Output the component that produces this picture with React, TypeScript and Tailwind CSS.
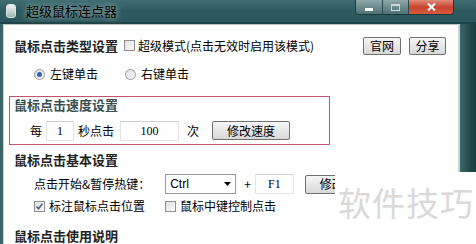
import React from "react";

const cjk = { fontFamily: '"SimSun", "Noto Sans CJK SC", sans-serif' };

function WinButton({ label, className = "" }: { label: string; className?: string }) {
  return (
    <div
      className={
        "flex items-center justify-center h-[18px] border border-[#707070] rounded-[2px] bg-gradient-to-b from-[#f6f6f6] to-[#d8d8d8] text-[12px] text-black leading-none " +
        className
      }
    >
      {label}
    </div>
  );
}

function Check({ checked = false }: { checked?: boolean }) {
  return (
    <div className="w-[11px] h-[11px] border border-[#8f8f8f] bg-gradient-to-br from-[#e2e2e2] to-[#fafafa] flex items-center justify-center">
      {checked && (
        <svg width="9" height="9" viewBox="0 0 9 9">
          <path d="M1.5 4.5 L3.5 6.8 L7.5 1.8" stroke="#4a5d8a" strokeWidth="1.6" fill="none" />
        </svg>
      )}
    </div>
  );
}

function Radio({ checked = false }: { checked?: boolean }) {
  return (
    <div className="w-[11px] h-[11px] rounded-full border border-[#9a9a9a] bg-gradient-to-br from-[#dedede] to-[#fbfbfb] flex items-center justify-center">
      {checked && <div className="w-[5px] h-[5px] rounded-full bg-[#2f63b5]" />}
    </div>
  );
}

function Field({ value, className = "" }: { value: string; className?: string }) {
  return (
    <div
      className={
        "h-[20px] border border-[#e4e4e4] border-t-[#cfcfcf] bg-white flex items-center justify-center text-[12px] text-black " +
        className
      }
      style={{ fontFamily: '"Liberation Serif", serif' }}
    >
      {value}
    </div>
  );
}

export default function App() {
  return (
    <div className="relative w-[476px] h-[244px] overflow-hidden bg-[#1d4347]" style={cjk}>
      {/* title bar */}
      <div className="h-[22px] flex items-start bg-gradient-to-b from-[#3f6d72] via-[#2d5a60] to-[#2a565b]">
        <div className="mt-[4px] ml-[6px] w-[10px] h-[14px] rounded-[3px] border border-[#d8e2e2] bg-gradient-to-b from-[#f0f4f4] to-[#9fb2b2]" />
        <span className="ml-[10px] mt-[3px] text-[13px] text-black leading-[16px] [text-shadow:0_0_6px_rgba(255,255,255,0.8)]">
          超级鼠标连点器
        </span>
        <div className="ml-auto mr-[22px] flex h-[15px] border border-t-0 border-[#1b3a3d] rounded-b-[4px] overflow-hidden">
          <div className="w-[27px] flex items-center justify-center bg-gradient-to-b from-[#8fa8aa] to-[#4f7174] border-r border-[#2a4a4d]">
            <div className="w-[8px] h-[3px] bg-white mt-[5px]" />
          </div>
          <div className="w-[26px] flex items-center justify-center bg-gradient-to-b from-[#8fa8aa] to-[#4f7174] border-r border-[#2a4a4d]">
            <div className="w-[9px] h-[7px] border border-[#cdd8d8] border-t-2" />
          </div>
          <div className="w-[44px] flex items-center justify-center bg-gradient-to-b from-[#e08a78] via-[#c8432e] to-[#d85a3a]">
            <svg width="9" height="8" viewBox="0 0 9 8">
              <path d="M1 0.5 L8 7.5 M8 0.5 L1 7.5" stroke="#fff" strokeWidth="2" />
            </svg>
          </div>
        </div>
      </div>

      <div className="flex h-[222px] pt-[2px]">
        <div className="w-[3px] bg-[#3b6468]" />
        <div className="w-[1px] bg-[#c9d4d4]" />
        {/* client */}
        <div className="w-[454px] bg-white flex flex-col text-[12px] text-black border-t border-[#b9c4c4]">
          <div className="mt-[11px] h-[20px] flex items-center">
            <span className="ml-[10px] text-[13px] text-[#222] font-semibold">鼠标点击类型设置</span>
            <div className="ml-[6px] flex items-center gap-[3px]">
              <Check />
              <span>超级模式(点击无效时启用该模式)</span>
            </div>
            <WinButton label="官网" className="ml-auto w-[38px]" />
            <WinButton label="分享" className="ml-[8px] mr-[12px] w-[37px]" />
          </div>

          <div className="mt-[9px] h-[20px] flex items-center">
            <div className="ml-[30px] flex items-center gap-[5px]">
              <Radio checked />
              <span>左键单击</span>
            </div>
            <div className="ml-[27px] flex items-center gap-[5px]">
              <Radio />
              <span>右键单击</span>
            </div>
          </div>

          <div className="mt-[12px] ml-[5px] w-[321px] h-[52px] border border-[#c2556e] flex flex-col">
            <span className="mt-[1px] ml-[4px] h-[14px] leading-[14px] text-[13px] text-[#37504f] font-semibold">鼠标点击速度设置</span>
            <div className="mt-[9px] h-[20px] flex items-center">
              <span className="ml-[20px]">每</span>
              <Field value="1" className="ml-[4px] w-[28px]" />
              <span className="ml-[4px]">秒点击</span>
              <Field value="100" className="ml-[6px] w-[59px]" />
              <span className="ml-[8px]">次</span>
              <WinButton label="修改速度" className="ml-[13px] w-[78px] h-[19px]" />
            </div>
          </div>

          <div className="mt-[7px] h-[16px] flex items-center">
            <span className="ml-[10px] text-[13px] text-[#222] font-semibold">鼠标点击基本设置</span>
          </div>

          <div className="mt-[6px] h-[20px] flex items-center">
            <span className="ml-[30px]">点击开始&amp;暂停热键：</span>
            <div
              className="ml-[15px] w-[71px] h-[20px] border border-[#9a9a9a] bg-white flex items-center pl-[4px] pr-[4px]"
              style={{ fontFamily: '"Liberation Sans", sans-serif' }}
            >
              <span className="text-[12px]">Ctrl</span>
              <svg className="ml-auto" width="7" height="4" viewBox="0 0 7 4">
                <path d="M0 0 L7 0 L3.5 4 Z" fill="#000" />
              </svg>
            </div>
            <span className="ml-[8px]">+</span>
            <Field value="F1" className="ml-[4px] w-[39px]" />
            <div className="ml-[11px] w-[30px] overflow-hidden">
              <WinButton label="修改热键" className="w-[78px] h-[19px]" />
            </div>
          </div>

          <div className="mt-[4px] h-[16px] flex items-center">
            <div className="ml-[30px] flex items-center gap-[4px]">
              <Check checked />
              <span>标注鼠标点击位置</span>
            </div>
            <div className="ml-[20px] flex items-center gap-[4px]">
              <Check />
              <span>鼠标中键控制点击</span>
            </div>
          </div>

          <div className="mt-[14px] h-[16px] flex items-center">
            <span className="ml-[10px] text-[13px] text-[#222] font-semibold">鼠标点击使用说明</span>
          </div>
        </div>
        <div className="w-[2px] bg-[#c9d4d4]" />
        <div className="w-[16px] bg-gradient-to-r from-[#3c6669] to-[#173a3d]" />
      </div>

      {/* watermark overlay */}
      <div className="absolute left-[336px] top-[172px] w-[140px] h-[72px] bg-white">
        <span className="absolute left-[2px] top-[14px] text-[33px] leading-none text-[#d9d9d9] tracking-[1px]" style={{ fontFamily: '"Noto Sans CJK SC", sans-serif' }}>
          软件技巧
        </span>
      </div>
    </div>
  );
}
